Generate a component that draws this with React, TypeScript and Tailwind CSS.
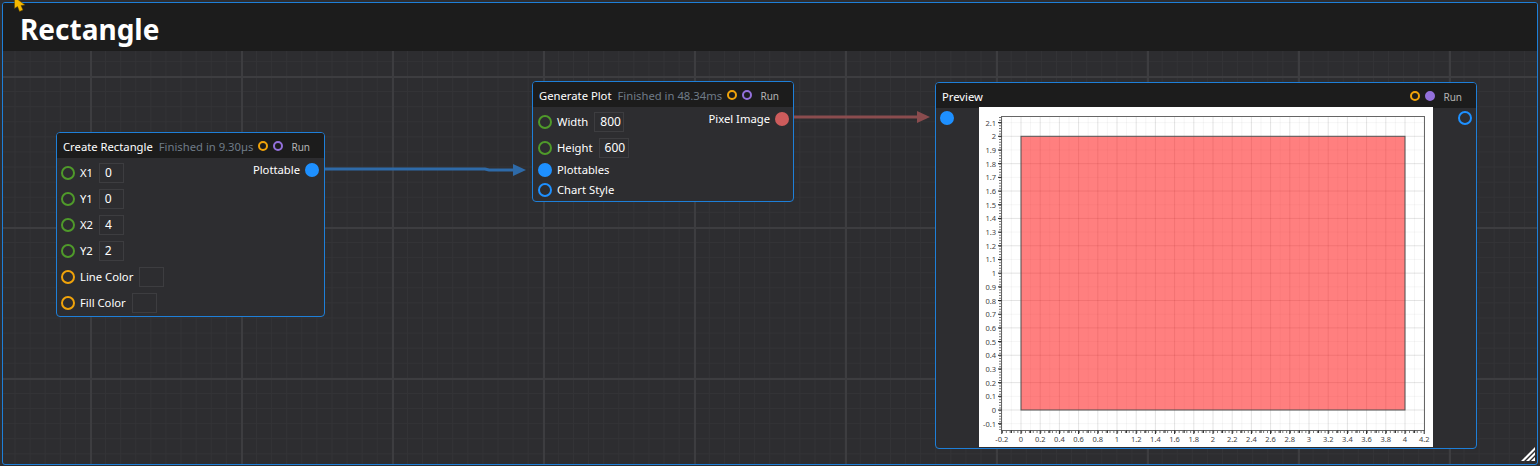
const FONT = "font-['Noto_Sans','Open_Sans',sans-serif]";

const PORT = {
  green: 'border-[#4f9a2a]',
  orange: 'border-[#f0a30a]',
  blue: 'border-[#1e90ff]',
};

function Port({ color, filled }: { color: keyof typeof PORT; filled?: boolean }) {
  return (
    <span
      className={`block size-[14px] shrink-0 rounded-full border-2 ${PORT[color]} ${filled ? 'bg-[#1e90ff]' : ''}`}
    />
  );
}

function Header({ title, status, purpleFilled }: { title: string; status?: string; purpleFilled?: boolean }) {
  return (
    <div className="flex h-[25px] items-center whitespace-nowrap bg-[#1c1c1c] pl-[6px] pr-[14px] pt-[1px] text-[11.25px] text-white">
      <span className="pt-[2px]">{title}</span>
      {status && <span className="ml-[6px] pt-[2px] text-[#6f7b87]">{status}</span>}
      <span className="ml-auto size-[10px] rounded-full border-2 border-[#f0a30a]" />
      <span
        className={`ml-[5px] size-[10px] rounded-full border-2 border-[#9370db] ${purpleFilled ? 'bg-[#9370db]' : ''}`}
      />
      <span className="ml-[8px] pt-[2px] text-[10px] text-[#b4b4b4]">Run</span>
    </div>
  );
}

function Field({ label, value, color, width = 'w-[25px]' }: { label: string; value?: string; color: keyof typeof PORT; width?: string }) {
  return (
    <div className="flex h-[26px] items-center gap-[5px] whitespace-nowrap text-[11.25px] text-white">
      <Port color={color} />
      <span>{label}</span>
      <span className={`ml-[1px] flex h-[20px] ${width} items-center border border-[#3d3d40] pl-[5px] text-[12px]`}>{value}</span>
    </div>
  );
}

function Chart() {
  const x = (v: number) => 42 + v * 96;
  const y = (v: number) => 303 - v * 136.85;
  const xs = Array.from({ length: 45 }, (_, i) => -0.2 + i * 0.1);
  const ys = Array.from({ length: 23 }, (_, i) => -0.1 + i * 0.1);
  const fmt = (v: number) => String(Math.round(v * 10) / 10);
  return (
    <svg width="454" height="340" className="-mt-[1px] block bg-white">
      {xs.map((v, i) => (
        <line key={i} x1={x(v)} x2={x(v)} y1="9" y2="323.5" stroke={i % 2 === 0 ? '#0000001c' : '#0000000a'} />
      ))}
      {ys.map((v, i) => (
        <line key={i} x1="23" x2="445" y1={y(v)} y2={y(v)} stroke={i % 2 === 0 ? '#0000000a' : '#0000001c'} />
      ))}
      <rect x={x(0)} y={y(2)} width={384} height={273.7} fill="#ff000080" stroke="#555" strokeWidth="1" />
      <rect x="22.5" y="9.5" width="423" height="314" fill="none" stroke="#666" />
      {/* minor ticks read as a dotted line along both axes */}
      <line x1="23" x2="445" y1="325" y2="325" stroke="#444" strokeWidth="1.5" strokeDasharray="1 2.84" />
      <line x1="21" x2="21" y1="10" y2="323" stroke="#444" strokeWidth="1.5" strokeDasharray="1 1.74" />
      {xs.map((v, i) => (
        <line key={i} x1={x(v)} x2={x(v)} y1="323.5" y2={i % 2 === 0 ? 327 : 326} stroke="#222" />
      ))}
      {ys.map((v, i) => (
        <line key={i} x1="22.5" x2={19} y1={y(v)} y2={y(v)} stroke="#222" />
      ))}
      {xs.filter((_, i) => i % 2 === 0).map((v) => (
        <text key={v} x={x(v)} y="335" textAnchor="middle" fontSize="7.5" fill="#444">{fmt(v)}</text>
      ))}
      {ys.map((v) => (
        <text key={v} x="17" y={y(v) + 3} textAnchor="end" fontSize="7.5" fill="#444">{fmt(v)}</text>
      ))}
    </svg>
  );
}

export default function App() {
  return (
    <div className={`h-[466px] w-[1540px] overflow-hidden bg-[#2d2d30] p-[2px] ${FONT}`}>
      <div className="relative h-[463px] w-[1536px] overflow-hidden rounded-[3px] border border-[#1e7fd8] bg-[#2d2d30] bg-[image:linear-gradient(#3d3d40_2px,transparent_2px),linear-gradient(90deg,#3d3d40_2px,transparent_2px),linear-gradient(#333336_1px,transparent_1px),linear-gradient(90deg,#333336_1px,transparent_1px)] bg-[size:151px_151px,151px_151px,15.1px_15.1px,15.1px_15.1px] bg-[position:87px_73px,87px_73px,87px_73px,87px_73px]">
        <div className="flex h-[48px] items-center bg-[#1c1c1c] pl-[17px] pt-[3px] text-[28px] font-bold text-white">Rectangle</div>

        <svg className="absolute left-0 top-0" width="1536" height="463">
          <path d="M322 166 L482 166 L486 167 L511 167" fill="none" stroke="#2e6aa8" strokeWidth="3" />
          <path d="M510 161 L523 167 L510 173 Z" fill="#2e6aa8" />
          <path d="M779 114 L916 114" fill="none" stroke="#8a4c4e" strokeWidth="3" />
          <path d="M914 108 L927 114 L914 120 Z" fill="#8a4c4e" />
        </svg>

        <div className="absolute left-[53px] top-[129px] h-[185px] w-[269px] overflow-hidden rounded-[4px] border border-[#1e7fd8] bg-[#2d2d30]">
          <Header title="Create Rectangle" status="Finished in 9.30µs" />
          <div className="flex justify-between pl-[4px] pr-[5px] pt-[2px]">
            <div>
              <Field label="X1" value="0" color="green" />
              <Field label="Y1" value="0" color="green" />
              <Field label="X2" value="4" color="green" />
              <Field label="Y2" value="2" color="green" />
              <Field label="Line Color" color="orange" />
              <Field label="Fill Color" color="orange" />
            </div>
            <div className="-mt-[1px] flex h-[22px] items-center gap-[5px] text-[11.25px] text-white">
              <span>Plottable</span>
              <Port color="blue" filled />
            </div>
          </div>
        </div>

        <div className="absolute left-[529px] top-[78px] h-[121px] w-[262px] overflow-hidden rounded-[4px] border border-[#1e7fd8] bg-[#2d2d30]">
          <Header title="Generate Plot" status="Finished in 48.34ms" />
          <div className="flex justify-between pl-[5px] pr-[4px] pt-[2px]">
            <div>
              <Field label="Width" value="800" color="green" width="w-[30px]" />
              <Field label="Height" value="600" color="green" width="w-[30px]" />
              <div className="-mt-[1px] flex h-[20px] items-center gap-[5px] text-[11.25px] text-white">
                <Port color="blue" filled />
                <span>Plottables</span>
              </div>
              <div className="flex h-[20px] items-center gap-[5px] text-[11.25px] text-white">
                <Port color="blue" />
                <span>Chart Style</span>
              </div>
            </div>
            <div className="-mt-[1px] flex h-[22px] items-center gap-[5px] text-[11.25px] text-white">
              <span>Pixel Image</span>
              <span className="size-[14px] rounded-full bg-[#cd5c5c]" />
            </div>
          </div>
        </div>

        <div className="absolute left-[932px] top-[79px] h-[367px] w-[542px] overflow-hidden rounded-[4px] border border-[#1e7fd8] bg-[#2d2d30]">
          <Header title="Preview" purpleFilled />
          <div className="flex items-start justify-between pl-[4px] pr-[4px]">
            <div className="pt-[3px]"><Port color="blue" filled /></div>
            <Chart />
            <div className="pt-[3px]"><Port color="blue" /></div>
          </div>
        </div>

        <svg className="absolute right-[2px] bottom-[3px]" width="14" height="14" viewBox="0 0 14 14">
          <path d="M14 0 L0 14 H3 L14 3 Z M14 5 L5 14 H8 L14 8 Z M14 10 L10 14 H14 Z" fill="#fff" />
        </svg>
      </div>
      <svg className="absolute left-[14px] top-0" width="13" height="13" viewBox="0 0 13 13">
        <path d="M0.5 -3 L0.5 8.5 L3.5 6.5 L5.5 11.5 L9 10 L7 5.5 L11 5 Z" fill="#f5b800" stroke="#5a4500" strokeWidth="0.5" />
      </svg>
    </div>
  );
}
